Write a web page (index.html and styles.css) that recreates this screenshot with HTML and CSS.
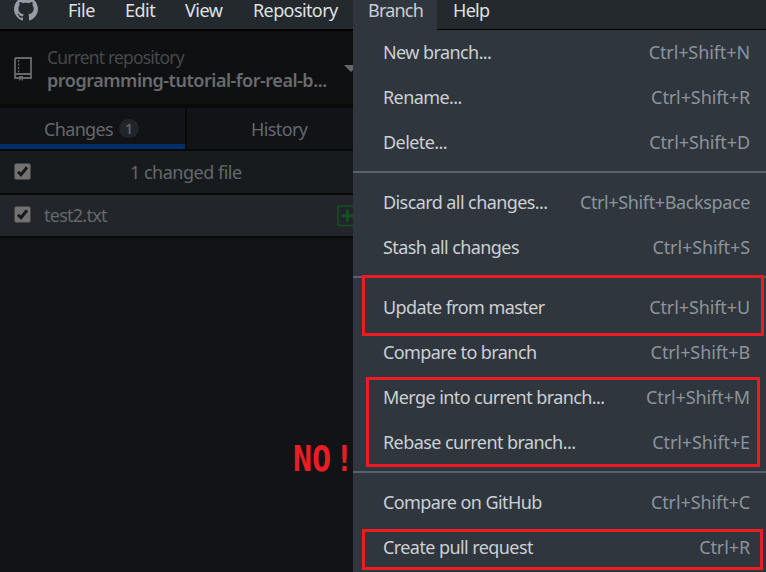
FILE: index.html
```html
<!DOCTYPE html>
<html lang="en">
<head>
<meta charset="utf-8">
<title>Branch menu</title>
<link rel="stylesheet" href="styles.css">
</head>
<body>
<div class="app">
  <nav class="menubar">
    <svg class="logo" viewBox="0 0 16 16"><path d="M8 0C3.58 0 0 3.58 0 8c0 3.54 2.29 6.53 5.47 7.59.4.07.55-.17.55-.38 0-.19-.01-.82-.01-1.49-2.01.37-2.53-.49-2.69-.94-.09-.23-.48-.94-.82-1.13-.28-.15-.68-.52-.01-.53.63-.01 1.08.58 1.23.82.72 1.21 1.87.87 2.33.66.07-.52.28-.87.51-1.07-1.78-.2-3.64-.89-3.64-3.95 0-.87.31-1.59.82-2.15-.08-.2-.36-1.02.08-2.12 0 0 .67-.21 2.2.82.64-.18 1.32-.27 2-.27s1.36.09 2 .27c1.53-1.04 2.2-.82 2.2-.82.44 1.1.16 1.92.08 2.12.51.56.82 1.27.82 2.15 0 3.07-1.87 3.75-3.65 3.95.29.25.54.73.54 1.48 0 1.07-.01 1.93-.01 2.2 0 .21.15.46.55.38A8.01 8.01 0 0 0 16 8c0-4.42-3.58-8-8-8z"/></svg>
    <span class="top file">File</span><span class="top edit">Edit</span><span class="top view">View</span><span class="top repo-menu">Repository</span><span class="top branch">Branch</span><span class="top help">Help</span>
  </nav>
  <div class="content">
    <aside class="sidebar">
      <header class="repository">
        <svg class="book" viewBox="0 0 18 24"><path d="M1 1h16v20H9M5 21H1V1M1 17h16" fill="none" stroke="currentColor" stroke-width="1.8"/><path d="M4 3h1.2v2H4zm0 3.5h1.2v2H4zM4 10h1.2v2H4zm0 3.3h1.2v2H4zM5 19h4v5l-2-2-2 2z" fill="currentColor"/></svg>
        <div class="repo-text"><div class="caption">Current repository</div><div class="repo-name">programming-tutorial-for-real-b...</div></div>
        <i class="caret"></i>
      </header>
      <div class="tabs">
        <div class="tab active"><span class="t-changes">Changes</span><b class="count">1</b></div>
        <div class="tab history"><span>History</span></div>
      </div>
      <div class="row summary">
        <svg class="check" viewBox="0 0 17 17"><rect x=".5" y=".5" width="16" height="16" rx="2" fill="#727272" stroke="#464646"/><path d="M4 8.7l3 3 6-7.4" fill="none" stroke="#191919" stroke-width="3"/></svg>
        <span class="t-summary">1 changed file</span>
      </div>
      <div class="row changed">
        <svg class="check" viewBox="0 0 17 17"><rect x=".5" y=".5" width="16" height="16" rx="2" fill="#727272" stroke="#464646"/><path d="M4 8.7l3 3 6-7.4" fill="none" stroke="#191919" stroke-width="3"/></svg>
        <span class="t-file">test2.txt</span>
        <svg class="added" viewBox="0 0 22 22"><path d="M1 1h20v19.5H1z" fill="none" stroke="#154f20" stroke-width="1.5"/><path d="M4.5 10.7h12M10.5 4.7v12" fill="none" stroke="#154f20" stroke-width="3"/></svg>
      </div>
      <div class="note"><span>NO</span><span class="bang">!</span></div>
    </aside>
    <section class="menu">
      <div class="item"><span>New branch...</span><kbd>Ctrl+Shift+N</kbd></div>
      <div class="item"><span>Rename...</span><kbd>Ctrl+Shift+R</kbd></div>
      <div class="item"><span>Delete...</span><kbd>Ctrl+Shift+D</kbd></div>
      <hr>
      <div class="item"><span>Discard all changes...</span><kbd class="long">Ctrl+Shift+Backspace</kbd></div>
      <div class="item"><span>Stash all changes</span><kbd>Ctrl+Shift+S</kbd></div>
      <hr>
      <div class="item"><span>Update from master</span><kbd>Ctrl+Shift+U</kbd><i class="mark mark-update"></i></div>
      <div class="item"><span>Compare to branch</span><kbd>Ctrl+Shift+B</kbd></div>
      <div class="item"><span>Merge into current branch...</span><kbd>Ctrl+Shift+M</kbd><i class="mark mark-merge"></i></div>
      <div class="item"><span>Rebase current branch...</span><kbd>Ctrl+Shift+E</kbd></div>
      <hr>
      <div class="item"><span>Compare on GitHub</span><kbd>Ctrl+Shift+C</kbd></div>
      <div class="item"><span>Create pull request</span><kbd>Ctrl+R</kbd><i class="mark mark-pull"></i></div>
    </section>
  </div>
</div>
</body>
</html>
```
FILE: styles.css
```css
* { box-sizing: border-box; }
body { margin: 0; background: #121317; font-family: "Noto Sans", sans-serif; font-size: 18px; letter-spacing: -0.5px; overflow: hidden; }
.app { width: 766px; height: 572px; overflow: hidden; display: flex; flex-direction: column; }
.menubar { height: 30px; flex: none; display: flex; background: #24292d; border-bottom: 1px solid #000; color: #dfe2e5; }
.logo { width: 24px; height: 24px; margin: -3px 16px 0 14px; fill: #959da5; flex: none; }
.top { height: 30px; line-height: 20px; padding-left: 14px; white-space: nowrap; flex: none; }
.file { width: 57px; }
.edit { width: 60px; }
.view { width: 68px; }
.repo-menu { width: 114px; letter-spacing: -0.6px; }
.branch { width: 84px; padding-left: 15px; letter-spacing: -0.8px; background: #2f363d; color: #c9cfd5; }
.help { padding-left: 16px; letter-spacing: -0.7px; }
.content { flex: 1; display: flex; min-height: 0; }
.sidebar { width: 353px; flex: none; overflow: hidden; color: #65686b; border-top: 1px solid #000; }
.repository { height: 77px; background: #0f1011; border-bottom: 4px solid #090909; display: flex; padding-left: 14px; }
.book { width: 18px; height: 24px; margin-top: 26px; color: #66696c; flex: none; }
.repo-text { width: 283px; margin: 15px 0 0 15px; white-space: nowrap; flex: none; }
.caption { line-height: 23px; font-size: 17px; letter-spacing: -0.82px; font-size: 17.5px; color: #45494d; }
.repo-name { line-height: 23px; font-weight: 600; letter-spacing: -0.47px; color: #696b6e; }
.caret { width: 14px; height: 7px; margin: 34px 0 0 14px; background: #66696c; clip-path: polygon(0 0, 100% 0, 50% 100%); flex: none; }
.tabs { height: 43px; display: flex; border-bottom: 2px solid #090909; }
.tab { display: flex; }
.tab span { line-height: 43px; }
.active { width: 187px; height: 41px; padding-left: 44px; border-right: 2px solid #090909; background: linear-gradient(#003069, #003069) 0 100% / 100% 5px no-repeat; }
.t-changes { letter-spacing: -0.65px; }
.count { width: 20px; height: 19px; margin: 11px 0 0 6px; border-radius: 10px; background: #212429; font-size: 15px; line-height: 19px; text-align: center; font-weight: 500; letter-spacing: 0; }
.history { padding-left: 64px; letter-spacing: -0.6px; }
.row { display: flex; border-bottom: 2px solid #090909; }
.summary { height: 44px; background: #171b1d; }
.changed { height: 43px; background: #222529; }
.check { width: 17px; height: 17px; margin: 12px 0 0 14px; flex: none; }
.changed .check { margin-top: 11px; }
.row span { line-height: 42px; white-space: nowrap; }
.t-summary { margin-left: 99px; }
.row .t-file { margin-left: 13px; width: 293px; flex: none; letter-spacing: -0.75px; line-height: 41px; }
.added { width: 22px; height: 22px; margin-top: 10px; flex: none; }
.note { display: flex; margin: 200px 0 0 293px; font: bold 36px/42px "DejaVu Sans Mono", monospace; color: #ed1c24; letter-spacing: 0; transform: scaleX(.88); transform-origin: 0 0; white-space: nowrap; }
.bang { margin-left: 4px; }
.menu { flex: 1; background: #2f363d; color: #ccd0d5; }
.item { position: relative; height: 45px; display: flex; justify-content: space-between; padding: 0 16px 0 30px; line-height: 45px; white-space: nowrap; letter-spacing: -0.58px; }
kbd { font-family: inherit; font-size: inherit; color: #8d949c; letter-spacing: -0.1px; }
.long { letter-spacing: -0.37px; }
hr { height: 2px; margin: 6px 0 7px; border: 0; background: #59616c; }
.mark { position: absolute; border: 3px solid #ed1c24; }
.mark-update { left: 9px; top: -10px; width: 402px; height: 61px; }
.mark-merge { left: 13px; top: 2px; width: 394px; height: 90px; }
.mark-pull { left: 9px; top: 4px; width: 401px; height: 41px; }
```
